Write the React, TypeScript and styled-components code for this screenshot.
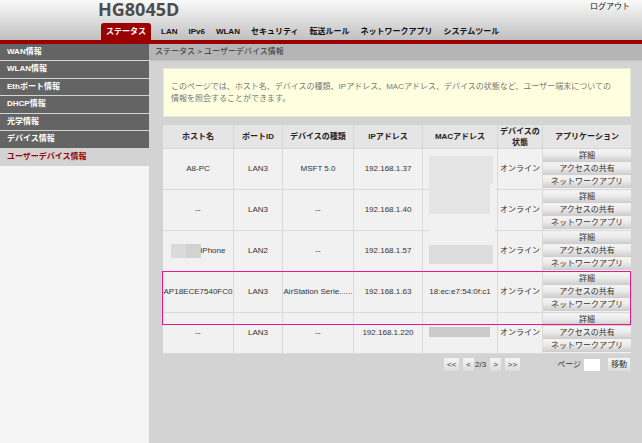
import React, { useState } from 'react'
import styled, { createGlobalStyle } from 'styled-components'

interface IDevice {
    id: number
    host: string
    port: string
    type: string
    ip: string
    mac: string
    maskedHost?: boolean
}

const tabs = ['ステータス', 'LAN', 'IPv6', 'WLAN', 'セキュリティ', '転送ルール', 'ネットワークアプリ', 'システムツール']

const menu = ['WAN情報', 'WLAN情報', 'Ethポート情報', 'DHCP情報', '光学情報', 'デバイス情報', 'ユーザーデバイス情報']

const devices: IDevice[] = [
    { id: 1, host: 'A8-PC', port: 'LAN3', type: 'MSFT 5.0', ip: '192.168.1.37', mac: '' },
    { id: 2, host: '--', port: 'LAN3', type: '--', ip: '192.168.1.40', mac: '' },
    { id: 3, host: 'iPhone', port: 'LAN2', type: '--', ip: '192.168.1.57', mac: '', maskedHost: true },
    { id: 4, host: 'AP18ECE7540FC0', port: 'LAN3', type: 'AirStation Serie......', ip: '192.168.1.63', mac: '18:ec:e7:54:0f:c1' },
    { id: 5, host: '--', port: 'LAN3', type: '--', ip: '192.168.1.220', mac: '' },
]

const actions = ['詳細', 'アクセスの共有', 'ネットワークアプリ']

const GlobalStyle = createGlobalStyle`
    * {
        box-sizing: border-box;
    }
    body {
        margin: 0;
        background: #d3d3d3;
        color: #333;
        font-family: "Liberation Sans", "Noto Sans CJK JP", sans-serif;
        font-size: 8px;
        line-height: 12px;
    }
    button, input {
        font: inherit;
        color: inherit;
    }
`

const DeviceRow: React.FC<{ item: IDevice }> = ({ item }) => {
    return (
        <tr>
            <Td>{item.maskedHost && <HostMask />}{item.host}</Td>
            <Td>{item.port}</Td>
            <Td>{item.type}</Td>
            <Td>{item.ip}</Td>
            <Td>{item.mac}</Td>
            <Td>オンライン</Td>
            <Td>
                <Actions>
                    {actions.map((title) => <ActionButton key={title} type='button'>{title}</ActionButton>)}
                </Actions>
            </Td>
        </tr>
    )
}

const App: React.FC = () => {
    const [page, setPage] = useState('')

    return (
        <Page>
            <GlobalStyle />
            <Header>
                <TitleRow>
                    <Model>HG8045D</Model>
                    <Logout href='#logout'>ログアウト</Logout>
                </TitleRow>
                <Tabs>
                    {tabs.map((title, i) => <Tab key={title} href='#tab' $active={i === 0}>{title}</Tab>)}
                </Tabs>
            </Header>
            <Body>
                <Sidebar>
                    <Menu>
                        {menu.map((title, i) => (
                            <MenuLink key={title} href='#menu' $active={i === menu.length - 1}>{title}</MenuLink>
                        ))}
                    </Menu>
                </Sidebar>
                <Main>
                    <Breadcrumb>ステータス &gt; ユーザーデバイス情報</Breadcrumb>
                    <Content>
                        <Notice>
                            このページでは、ホスト名、デバイスの種類、IPアドレス、MACアドレス、デバイスの状態など、ユーザー端末についての情報を照会することができます。
                        </Notice>
                        <TableWrapper>
                            <Table>
                                <colgroup>
                                    <Col $width={71} />
                                    <Col $width={49} />
                                    <Col $width={71} />
                                    <Col $width={69} />
                                    <Col $width={75} />
                                    <Col $width={45} />
                                    <Col $width={88} />
                                </colgroup>
                                <thead>
                                    <tr>
                                        <Th>ホスト名</Th>
                                        <Th>ポートID</Th>
                                        <Th>デバイスの種類</Th>
                                        <Th>IPアドレス</Th>
                                        <Th>MACアドレス</Th>
                                        <Th>デバイスの状態</Th>
                                        <Th>アプリケーション</Th>
                                    </tr>
                                </thead>
                                <tbody>
                                    {devices.map((item) => <DeviceRow key={item.id} item={item} />)}
                                </tbody>
                            </Table>
                            <Cover $top={28} $height={78} $width={66} $color='#f1f1f1' />
                            <Cover $top={31} $height={28} $width={64} $color='#e4e4e4' />
                            <Cover $top={59} $height={30} $width={61} $color='#e4e4e4' />
                            <Cover $top={120} $height={19} $width={64} $color='#dddddd' />
                            <Cover $top={202} $height={10} $width={61} $color='#cbcbcb' />
                            <Highlight />
                        </TableWrapper>
                        <Pager>
                            <PageButtons>
                                <PagerButton type='button'>&lt;&lt;</PagerButton>
                                <CurrentPage>
                                    <PagerButton type='button'>&lt;</PagerButton>
                                    2/3
                                </CurrentPage>
                                <PagerButton type='button'>&gt;</PagerButton>
                                <PagerButton type='button'>&gt;&gt;</PagerButton>
                            </PageButtons>
                            <PageLabel>
                                ページ
                                <PageInput value={page} onChange={(e) => setPage(e.target.value)} />
                            </PageLabel>
                            <PagerButton type='button'>移動</PagerButton>
                        </Pager>
                    </Content>
                </Main>
            </Body>
        </Page>
    )
}

const Page = styled.div`
    min-height: 100vh;
    display: flex;
    flex-direction: column;
`

const Header = styled.header`
    background: linear-gradient(#fafafa, #c0c0c0);
    border-bottom: 4px solid #990000;
`

const TitleRow = styled.div`
    padding: 0 12px 0 98px;
    display: flex;
    justify-content: space-between;
    align-items: flex-start;
`

const Model = styled.h1`
    margin: 0;
    padding-bottom: 5px;
    color: #4d4d4d;
    font-family: "Open Sans", sans-serif;
    font-size: 18px;
    font-weight: 700;
    line-height: 18px;
`

const Logout = styled.a`
    padding-top: 1px;
    color: #111;
    text-decoration: none;
`

const Tabs = styled.nav`
    height: 17px;
    padding-left: 101px;
    display: flex;
    gap: 11px;
`

const Tab = styled.a<{ $active: boolean }>`
    padding: ${({ $active }) => $active ? '0 5px' : '0'};
    margin-right: ${({ $active }) => $active ? '-1px' : '0'};
    border-radius: 3px 3px 0 0;
    background: ${({ $active }) => $active ? '#990000' : 'transparent'};
    color: ${({ $active }) => $active ? '#fff' : '#111'};
    font-weight: 700;
    line-height: 17px;
    text-decoration: none;
    white-space: nowrap;
`

const Body = styled.div`
    flex: 1;
    display: flex;
`

const Sidebar = styled.aside`
    flex: 0 0 149px;
    background: #f5f5f5;
`

const Menu = styled.nav`
    height: 122px;
    display: flex;
    flex-direction: column;
`

const MenuLink = styled.a<{ $active: boolean }>`
    flex: 1;
    padding-left: 7px;
    border-bottom: 1px solid #d3d3d3;
    background: ${({ $active }) => $active ? '#d3d3d3' : '#646464'};
    color: ${({ $active }) => $active ? '#990000' : '#fff'};
    font-weight: 700;
    line-height: 16px;
    text-decoration: none;
`

const Main = styled.main`
    flex: 1;
    min-width: 0;
`

const Breadcrumb = styled.div`
    height: 17px;
    padding-left: 6px;
    border-bottom: 1px solid #c3c3c3;
    background: #b5b5b5;
    line-height: 16px;
`

const Content = styled.div`
    padding: 7px 11px 0 14px;
`

const Notice = styled.p`
    margin: 0 0 8px;
    padding: 12px 14px 11px 7px;
    background: #ffffe0;
    border: 1px solid #e2eadb;
    color: #777;
`

const TableWrapper = styled.div`
    position: relative;
`

const Table = styled.table`
    width: 100%;
    table-layout: fixed;
    border-collapse: separate;
    border-spacing: 0;
`

const Col = styled.col<{ $width: number }>`
    width: ${({ $width }) => $width}px;
`

const Th = styled.th`
    height: 24px;
    padding: 0;
    border-right: 1px solid #d6d6d6;
    border-bottom: 1px solid #d6d6d6;
    background: #e5e5e5;
    color: #222;
    line-height: 11px;

    &:last-child {
        border-right: 0;
    }
`

const Td = styled.td`
    height: 41px;
    padding: 0;
    border-right: 1px solid #dadada;
    border-bottom: 1px solid #dadada;
    background: #f1f1f1;
    text-align: center;
    white-space: nowrap;

    &:last-child {
        border-right: 0;
    }
`

const HostMask = styled.span`
    display: inline-block;
    width: 30px;
    height: 14px;
    background: linear-gradient(90deg, #dadadc 50%, #d2d2d0 50%);
    vertical-align: middle;
`

const Actions = styled.div`
    display: grid;
    gap: 1px;
`

const ActionButton = styled.button`
    width: 100%;
    height: 12px;
    padding: 0;
    border: 0;
    background: linear-gradient(#f4f4f4, #ececec 40%, #cccccc);
    line-height: 12px;
`

const Cover = styled.span<{ $top: number, $height: number, $width: number, $color: string }>`
    position: absolute;
    top: ${({ $top }) => $top}px;
    left: 266px;
    width: ${({ $width }) => $width}px;
    height: ${({ $height }) => $height}px;
    background: ${({ $color }) => $color};
`

const Highlight = styled.span`
    position: absolute;
    top: 146px;
    left: -1px;
    right: 0;
    height: 54px;
    border: 1px solid #e5198a;
`

const Pager = styled.div`
    padding: 4px 1px 0 0;
    display: flex;
    justify-content: flex-end;
    align-items: center;
`

const PageButtons = styled.div`
    margin-right: 37px;
    display: flex;
    align-items: center;
    gap: 4px;
`

const CurrentPage = styled.span`
    display: flex;
    align-items: center;
    gap: 1px;
`

const PagerButton = styled.button`
    height: 13px;
    padding: 0 3px;
    border: 0;
    background: linear-gradient(#f4f4f4, #ececec 40%, #dddddd);
    line-height: 13px;
`

const PageLabel = styled.label`
    margin-right: 8px;
    display: flex;
    align-items: center;
    gap: 3px;
`

const PageInput = styled.input`
    width: 16px;
    height: 12px;
    padding: 0;
    border: 0;
    background: #fff;
`

export default App
